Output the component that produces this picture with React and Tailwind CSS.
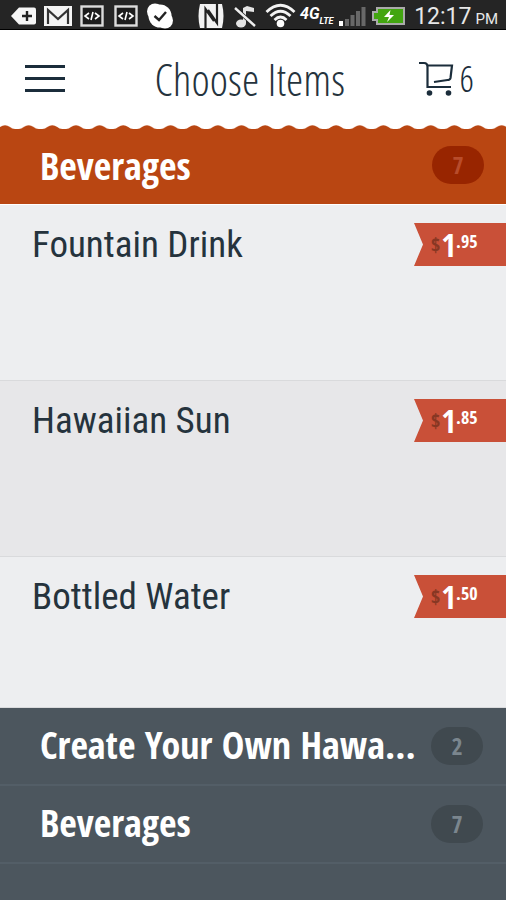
import React, { useState } from "react"

const items = [
  { name: "Fountain Drink", dollars: "1", cents: "95", row: "min-h-44 bg-[#edeef0]" },
  { name: "Hawaiian Sun", dollars: "1", cents: "85", row: "min-h-44 bg-[#e7e7e9]" },
  { name: "Bottled Water", dollars: "1", cents: "50", row: "min-h-[151px] bg-[#edeef0]" },
]

const sections = [
  { id: "create", name: "Create Your Own Hawaiian Plate", count: 2 },
  { id: "beverages", name: "Beverages", count: 7 },
]

function CodeIcon() {
  return (
    <svg viewBox="0 0 24 24" className="size-6" aria-hidden="true">
      <rect x="1.5" y="2.5" width="21" height="19" fill="#1c1c1c" stroke="#dcdcdc" strokeWidth="2.4" />
      <path d="M9 9l-4 3 4 3M15 9l4 3-4 3M13 8l-2 8" fill="none" stroke="#fff" strokeWidth="1.6" />
    </svg>
  )
}

function StatusBar() {
  return (
    <div className="flex h-[30px] items-center bg-[#252525] pl-[11px] pr-2 pt-[2px] border-b border-black text-white font-['Roboto',sans-serif]">
      <svg viewBox="0 0 26 20" className="h-5 w-[26px]" aria-hidden="true">
        <path d="M0 10L8 1.500H23Q25 1.500 25 3.500V16.500Q25 18.500 23 18.500H8Z" fill="#f6f6f6" />
        <path d="M16 5v10M11 10h10" stroke="#222" strokeWidth="2.400" />
      </svg>
      <svg viewBox="0 0 28 20" className="ml-[7px] h-5 w-7" aria-hidden="true">
        <path d="M0 0H28V20H0Z" fill="#f4f4f4" />
        <path d="M4 18V4L14 13L24 4V18" fill="none" stroke="#333" strokeWidth="2.200" />
      </svg>
      <div className="ml-2 flex gap-[10px]">
        <CodeIcon />
        <CodeIcon />
      </div>
      <svg viewBox="0 0 28 26" className="ml-2 h-[26px] w-7" aria-hidden="true">
        <circle cx="9" cy="8.500" r="8" fill="#fff" />
        <circle cx="19" cy="17.500" r="8" fill="#fff" />
        <circle cx="14" cy="13" r="11.500" fill="#fff" />
        <path d="M8.500 13L13 17L20 9" fill="none" stroke="#222" strokeWidth="2.400" />
      </svg>
      <svg viewBox="0 0 28 26" className="ml-[23px] h-[26px] w-7" aria-hidden="true">
        <path d="M3 1H25Q28 13 25 25H3Q0 13 3 1Z" fill="#f2f2f2" />
        <path d="M8.500 25V6L17 18M11 7L20 20V1" fill="none" stroke="#222" strokeWidth="2.200" />
      </svg>
      <svg viewBox="0 0 24 26" className="ml-2 h-[26px] w-6" aria-hidden="true">
        <path d="M10 20V5L14 3L21 5V9L13 8V20Z" fill="#e4e4e4" />
        <ellipse cx="8" cy="20.500" rx="5" ry="4" fill="#e4e4e4" />
        <path d="M2 5L22 23" stroke="#222" strokeWidth="4" />
        <path d="M2 5L22 23" stroke="#eee" strokeWidth="2.400" />
      </svg>
      <svg viewBox="0 0 31 25" className="ml-2 h-[25px] w-[31px]" aria-hidden="true">
        <g fill="none" stroke="#f4f4f4" strokeWidth="2.800">
          <path d="M1.500 9Q15.500 -4.500 29.500 9" />
          <path d="M5.500 13Q15.500 3.500 25.500 13" />
          <path d="M9.500 17Q15.500 11 21.500 17" />
        </g>
        <circle cx="15.500" cy="20.500" r="3.800" fill="#fff" />
      </svg>
      <div className="ml-1 flex w-[35px] items-end font-bold italic">
        <span className="pb-1 text-[16px] leading-[18px]">4G</span>
        <span className="text-[9px] leading-[11px]">LTE</span>
      </div>
      <svg viewBox="0 0 27 20" className="ml-1 h-5 w-[27px]" aria-hidden="true">
        <path d="M0 15h4v5H0z" fill="#fff" />
        <path d="M6 13h4v7H6zM11.500 9h4v11h-4zM17 5h4v15h-4zM22.500 1h4v19h-4z" fill="#686868" />
      </svg>
      <svg viewBox="0 0 33 18" className="ml-[6px] h-[18px] w-[33px]" aria-hidden="true">
        <path d="M5 1H32V17H5V13H1V5H5Z" fill="#42a510" stroke="#aaa" strokeWidth="2" />
        <path d="M18.500 3L12 10H17L15 15L22 8H17.500Z" fill="#fff" />
      </svg>
      <div className="ml-auto flex items-baseline gap-1 whitespace-nowrap pt-1 text-[#e8e8e8]">
        <span className="text-[23px] leading-6">12:17</span>
        <span className="text-[15px] leading-6">PM</span>
      </div>
    </div>
  )
}

function Header() {
  return (
    <header className="flex h-[99px] items-center justify-between bg-white pl-[25px] pr-8 pb-[2px] text-[#1b2d3b] font-['Open_Sans_Condensed_Light','Roboto_Condensed','Liberation_Sans_Narrow',sans-serif]">
      <button type="button" aria-label="Open menu" className="flex w-10 flex-col gap-[9px]">
        <span className="h-[3px] bg-[#1b2d3b]" />
        <span className="h-[3px] bg-[#1b2d3b]" />
        <span className="h-[3px] bg-[#1b2d3b]" />
      </button>
      <h1 className="pl-4 text-[44px] leading-[60px] font-light text-[#25333d]">Choose Items</h1>
      <button type="button" aria-label="Cart, 6 items" className="flex items-center gap-[6px]">
        <svg viewBox="0 0 35 36" className="h-9 w-[35px]" aria-hidden="true">
          <g fill="none" stroke="#1b2d3b" strokeWidth="2.200">
            <path d="M0 2H5Q8.500 2 8.500 6V26H32" />
            <path d="M9 4.500H33L31.500 17Q31 19 28.500 19L15 21" />
          </g>
          <circle cx="10.500" cy="32" r="2.800" fill="#1b2d3b" />
          <circle cx="29.500" cy="32" r="2.800" fill="#1b2d3b" />
        </svg>
        <span className="text-[36px] leading-9">6</span>
      </button>
    </header>
  )
}

function Scallops() {
  return (
    <svg className="-mt-1 block h-[5px] w-full" aria-hidden="true">
      <defs>
        <pattern id="scallop" x="-7" width="23.650" height="5" patternUnits="userSpaceOnUse">
          <path d="M0 5V4H2Q5 4 7 2Q12 -1.500 17 2Q19 4 22 4H23.650V5Z" fill="#b94612" />
        </pattern>
      </defs>
      <rect width="100%" height="5" fill="url(#scallop)" />
    </svg>
  )
}

function PriceTag({ dollars, cents }) {
  return (
    <div className="flex h-[43px] w-[92px] shrink-0 items-center bg-[#c95038] pl-[17px] font-bold text-white [clip-path:polygon(0_0,100%_0,100%_100%,0_100%,9px_50%)]">
      <span className="text-[20px] leading-6 text-[#873723]">$</span>
      <span className="pl-px text-[32px] leading-8">{dollars}</span>
      <span className="pb-2 text-[18px] leading-6">.{cents}</span>
    </div>
  )
}

export default function App() {
  const [opened, setOpened] = useState(true)

  return (
    <div className="flex min-h-screen flex-col bg-[#4c565e] font-['Open_Sans_Condensed','Noto_Sans_Condensed','Roboto_Condensed','Liberation_Sans_Narrow',sans-serif]">
      <StatusBar />
      <Header />

      <main className="flex grow flex-col">
        <Scallops />
        <button
          type="button"
          onClick={() => setOpened(!opened)}
          aria-expanded={opened}
          className="flex h-[74px] w-full items-center justify-between bg-[#b94612] pl-10 pr-[22px] pb-1 text-left"
        >
          <span className="text-[38px] leading-[54px] font-bold text-white">Beverages</span>
          <span className="flex h-[38px] w-[52px] items-center justify-center rounded-full bg-[#982500] text-[24px] leading-8 font-bold text-[#b84c2b]">7</span>
        </button>

        {opened && (
          <ul className="border-t border-white">
            {items.map(({ name, dollars, cents, row }) => (
              <li key={name} className={`${row} flex items-start justify-between border-b border-[#d9dadc] pl-8 pt-[18px]`}>
                <h2 className="text-[37px] leading-[43px] text-[#25333d] font-['Roboto_Condensed','Liberation_Sans_Narrow',sans-serif]">{name}</h2>
                <PriceTag dollars={dollars} cents={cents} />
              </li>
            ))}
          </ul>
        )}

        {sections.map(({ id, name, count }) => (
          <button
            key={id}
            type="button"
            className="flex h-[78px] w-full items-center gap-[10px] border-b-2 border-[#535e67] bg-[#4c565e] pl-10 pr-[23px] text-left"
          >
            <span className="min-w-0 grow truncate pb-1 text-[38px] leading-[54px] font-bold text-white">{name}</span>
            <span className="flex h-[38px] w-[52px] shrink-0 items-center justify-center rounded-full bg-[#40494f] text-[24px] leading-8 font-bold text-[#7b868e]">{count}</span>
          </button>
        ))}
      </main>
    </div>
  )
}
